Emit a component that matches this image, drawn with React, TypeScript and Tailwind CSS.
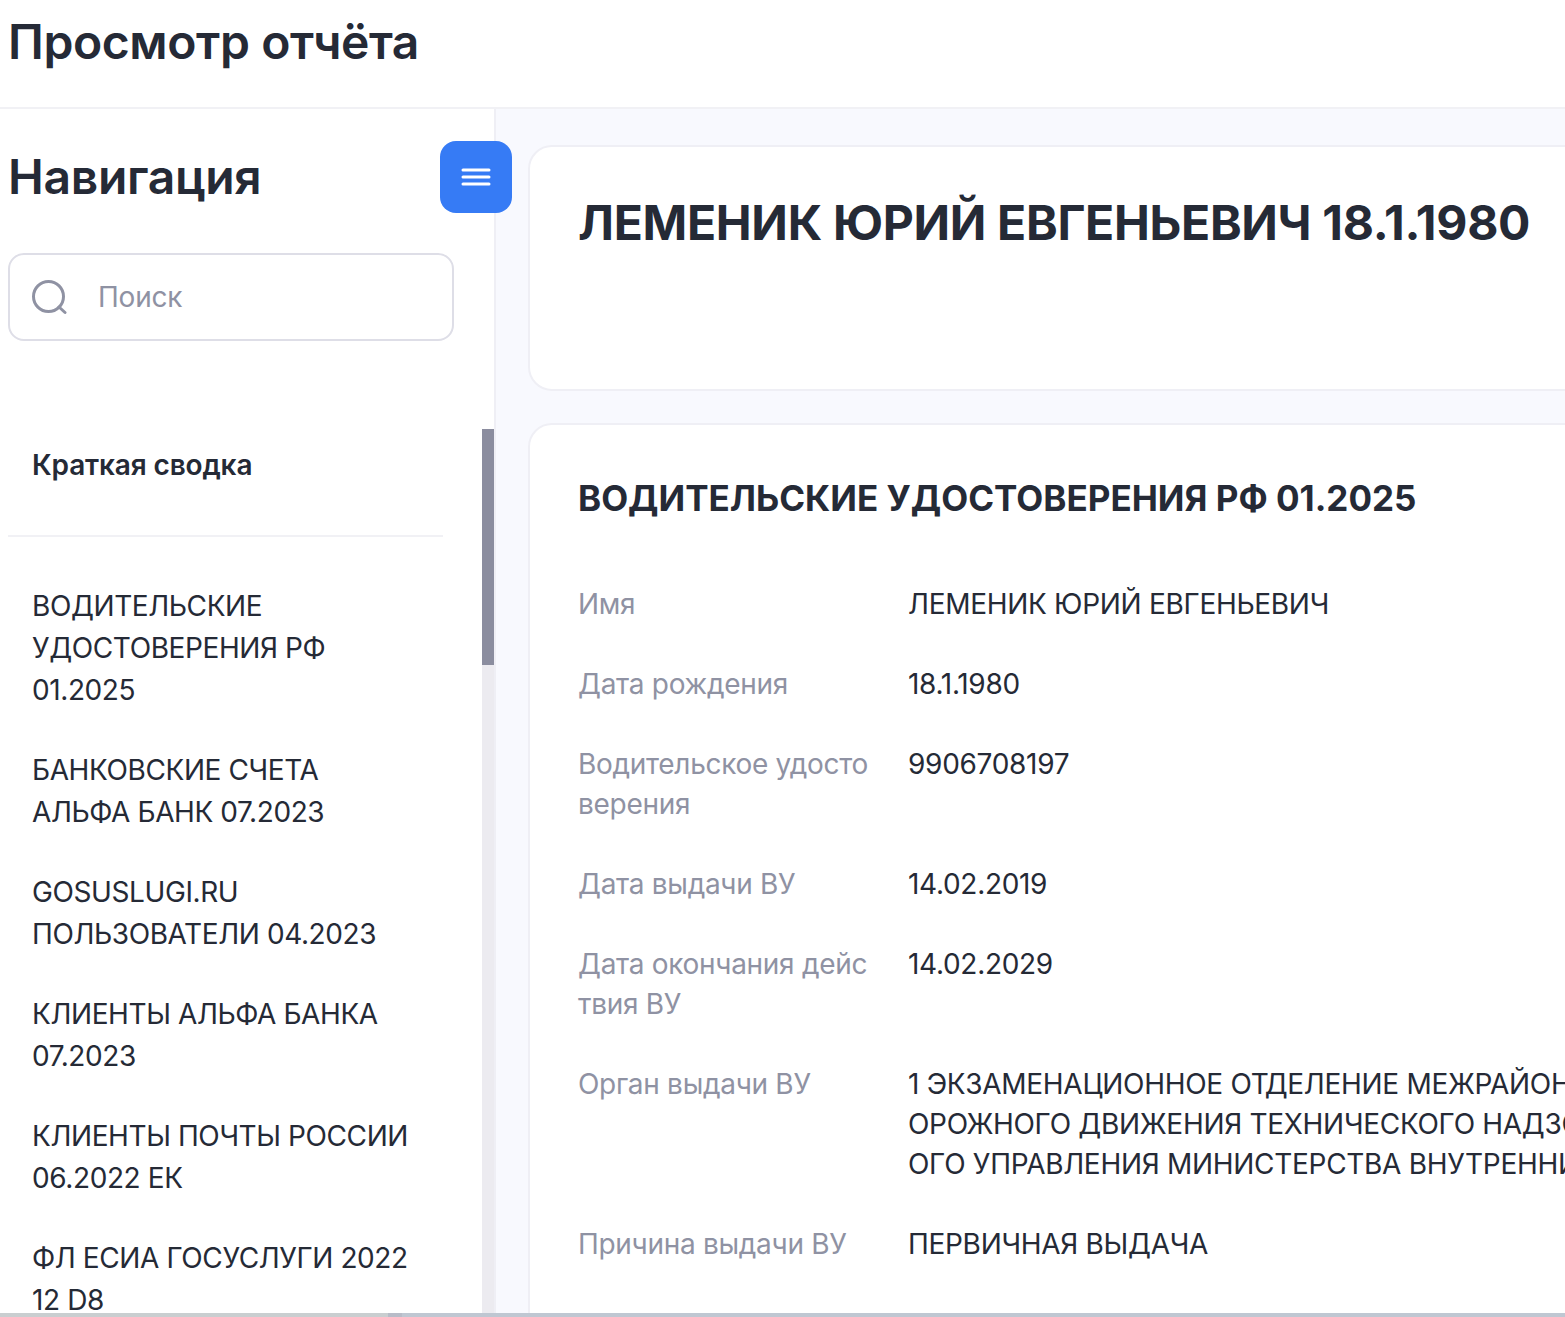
const navItems = [
  ["ВОДИТЕЛЬСКИЕ", "УДОСТОВЕРЕНИЯ РФ", "01.2025"],
  ["БАНКОВСКИЕ СЧЕТА", "АЛЬФА БАНК 07.2023"],
  ["GOSUSLUGI.RU", "ПОЛЬЗОВАТЕЛИ 04.2023"],
  ["КЛИЕНТЫ АЛЬФА БАНКА", "07.2023"],
  ["КЛИЕНТЫ ПОЧТЫ РОССИИ", "06.2022 ЕК"],
  ["ФЛ ЕСИА ГОСУСЛУГИ 2022", "12 D8"],
];

const rows: { label: string[]; value: string[] }[] = [
  { label: ["Имя"], value: ["ЛЕМЕНИК ЮРИЙ ЕВГЕНЬЕВИЧ"] },
  { label: ["Дата рождения"], value: ["18.1.1980"] },
  { label: ["Водительское удосто", "верения"], value: ["9906708197"] },
  { label: ["Дата выдачи ВУ"], value: ["14.02.2019"] },
  { label: ["Дата окончания дейс", "твия ВУ"], value: ["14.02.2029"] },
  {
    label: ["Орган выдачи ВУ"],
    value: [
      "1 ЭКЗАМЕНАЦИОННОЕ ОТДЕЛЕНИЕ МЕЖРАЙОННОГО",
      "ОРОЖНОГО ДВИЖЕНИЯ ТЕХНИЧЕСКОГО НАДЗОРА",
      "ОГО УПРАВЛЕНИЯ МИНИСТЕРСТВА ВНУТРЕННИХ",
    ],
  },
  { label: ["Причина выдачи ВУ"], value: ["ПЕРВИЧНАЯ ВЫДАЧА"] },
];

export default function App() {
  return (
    <div className="flex h-[1317px] w-full flex-col overflow-hidden bg-white font-['Inter',sans-serif] text-[#252a36]">
      <header className="flex h-[109px] shrink-0 items-start border-b-2 border-[#f1f1f5] pl-[8px] pt-[14px]">
        <h1 className="text-[48px] font-semibold leading-[56px] tracking-[-0.4px]">Просмотр отчёта</h1>
      </header>

      <div className="flex min-h-0 flex-1">
        <aside className="relative flex w-[496px] shrink-0 flex-col border-r-2 border-[#efeff5]">
          <div className="pl-[8px] pt-[40px]">
            <h2 className="text-[48px] font-semibold leading-[56px] tracking-[-0.3px]">Навигация</h2>
            <div className="mt-[48px] flex h-[88px] w-[446px] items-center rounded-[16px] border-2 border-[#dedee7] pl-[21px]">
              <svg width="36" height="36" viewBox="0 0 36 36" fill="none" stroke="#8f92a3" strokeWidth="3" strokeLinecap="round">
                <circle cx="17.5" cy="17.5" r="15" />
                <path d="M28 28l6 5.5" />
              </svg>
              <span className="ml-[31px] text-[28px] tracking-[-0.2px] text-[#8f92a3]">Поиск</span>
            </div>
          </div>

          <button className="absolute left-[440px] top-[32px] flex h-[72px] w-[72px] items-center justify-center rounded-[16px] bg-[#367bf5]">
            <svg width="30" height="20" viewBox="0 0 30 20" fill="none" stroke="white" strokeWidth="3" strokeLinecap="round">
              <path d="M2 3h26M2 10h26M2 17h26" />
            </svg>
          </button>

          <div className="mt-[88px] flex min-h-0 flex-1">
            <nav className="min-w-0 flex-1 overflow-hidden pl-[8px]">
              <div className="flex h-[108px] w-[435px] items-center border-b-2 border-[#f1f1f5] pb-[34px] pl-[24px] text-[28px] font-semibold tracking-[-0.15px]">
                Краткая сводка
              </div>
              <div className="flex flex-col gap-[38px] pl-[24px] pt-[48px] tracking-[-0.4px]">
                {navItems.map((item) => (
                  <div key={item[0]} className="text-[28px] leading-[42px] whitespace-nowrap">
                    {item.map((line) => (
                      <div key={line}>{line}</div>
                    ))}
                  </div>
                ))}
              </div>
            </nav>
            <div className="w-[12px] shrink-0 bg-[#ecebf0]">
              <div className="h-[236px] bg-[#8b8d9f]" />
            </div>
          </div>
        </aside>

        <main className="flex min-w-0 flex-1 flex-col gap-[32px] overflow-hidden bg-[#f8f9fe] pl-[32px] pt-[36px]">
          <section className="h-[246px] w-[1200px] shrink-0 rounded-l-[24px] border-2 border-[#efeff5] bg-white pl-[48px] pt-[40px]">
            <h1 className="whitespace-nowrap text-[48px] font-bold leading-[72px] tracking-[-0.3px]">ЛЕМЕНИК ЮРИЙ ЕВГЕНЬЕВИЧ 18.1.1980</h1>
          </section>
          <section className="h-[1000px] w-[1200px] shrink-0 rounded-l-[24px] border-2 border-[#efeff5] bg-white pl-[48px] pt-[46px]">
            <h2 className="whitespace-nowrap text-[35px] font-bold leading-[54px]">ВОДИТЕЛЬСКИЕ УДОСТОВЕРЕНИЯ РФ 01.2025</h2>
            <div className="mt-[59px] flex flex-col gap-[40px] tracking-[-0.3px]">
              {rows.map((row) => (
                <div key={row.label[0]} className="flex text-[28px] leading-[40px]">
                  <div className="w-[330px] shrink-0 whitespace-nowrap text-[#8f92a3]">
                    {row.label.map((line) => (
                      <div key={line}>{line}</div>
                    ))}
                  </div>
                  <div className="whitespace-nowrap">
                    {row.value.map((line) => (
                      <div key={line}>{line}</div>
                    ))}
                  </div>
                </div>
              ))}
            </div>
          </section>
        </main>
      </div>

      <div className="flex h-[4px] shrink-0 bg-[#bfc7d2]">
        <div className="w-[388px] bg-[#c9ced0]" />
        <div className="w-[14px] bg-[#b8bcc8]" />
      </div>
    </div>
  );
}
